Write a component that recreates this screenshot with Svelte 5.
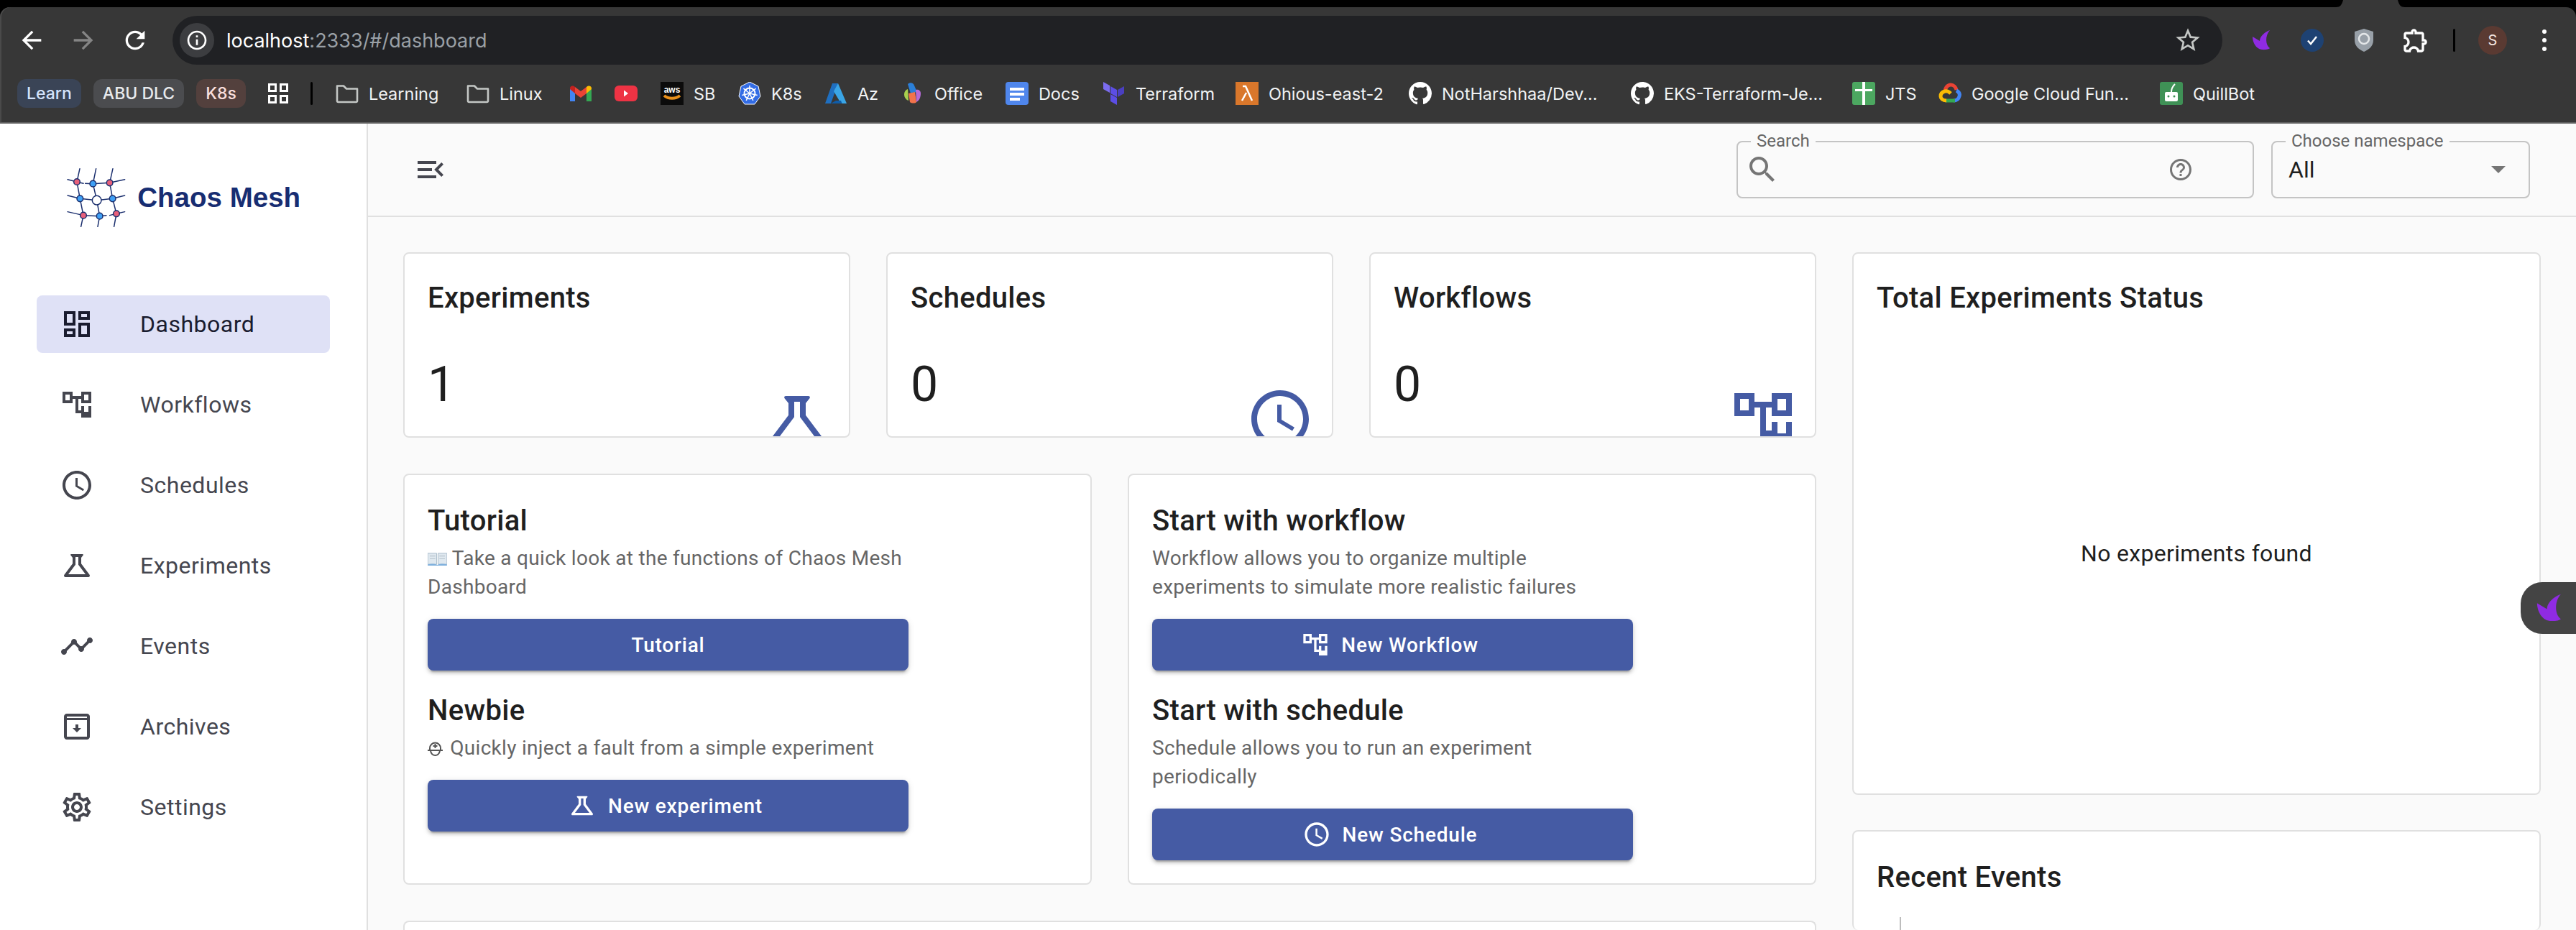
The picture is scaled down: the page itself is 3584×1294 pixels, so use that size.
<script>
  const icons = {
    dashboard: 'M19 5v2h-4V5h4M9 5v6H5V5h4m10 8v6h-4v-6h4M9 17v2H5v-2h4M21 3h-8v6h8V3zM11 3H3v10h8V3zm10 8h-8v10h8V11zm-10 4H3v6h8v-6z',
    flow: 'M22 11V3h-7v3H9V3H2v8h7V8h2v10h4v3h7v-8h-7v3h-2V8h2v3h7zM7 9H4V5h3v4zm10 4h3v4h-3v-4zm0-8h3v4h-3V5z',
    clock: 'M11.99 2C6.47 2 2 6.48 2 12s4.47 10 9.99 10C17.52 22 22 17.52 22 12S17.52 2 11.99 2zM12 20c-4.42 0-8-3.58-8-8s3.58-8 8-8 8 3.58 8 8-3.58 8-8 8zM12.5 7H11v6l5.25 3.15.75-1.23-4.5-2.67z',
    flask: 'M13 6v5.33L18 18H6l5-6.67V6h2M15.96 4H8.04c-.42 0-.65.48-.39.81L9 6.5v4.17L3.2 18.4C2.71 19.06 3.18 20 4 20h16c.82 0 1.29-.94.8-1.6L15 10.67V6.5l1.35-1.69c.26-.33.03-.81-.39-.81z',
    events: 'M23 8c0 1.1-.9 2-2 2-.18 0-.35-.02-.51-.07l-3.56 3.55c.05.16.07.34.07.52 0 1.1-.9 2-2 2s-2-.9-2-2c0-.18.02-.36.07-.52l-2.55-2.55c-.16.05-.34.07-.52.07s-.36-.02-.52-.07l-4.55 4.56c.05.16.07.33.07.51 0 1.1-.9 2-2 2s-2-.9-2-2 .9-2 2-2c.18 0 .35.02.51.07l4.56-4.55C8.02 9.36 8 9.18 8 9c0-1.1.9-2 2-2s2 .9 2 2c0 .18-.02.36-.07.52l2.55 2.55c.16-.05.34-.07.52-.07s.36.02.52.07l3.55-3.56C19.02 8.35 19 8.18 19 8c0-1.1.9-2 2-2s2 .9 2 2z',
    archive: 'M19 3H5c-1.1 0-2 .9-2 2v14c0 1.1.9 2 2 2h14c1.1 0 2-.9 2-2V5c0-1.1-.9-2-2-2zM5 5h14v1H5V5zm0 14V7.5h14V19H5zm8-8.5h-2V13H9l3 3 3-3h-2z',
    settings: 'M19.43 12.98c.04-.32.07-.64.07-.98 0-.34-.03-.66-.07-.98l2.11-1.65c.19-.15.24-.42.12-.64l-2-3.46c-.09-.16-.26-.25-.44-.25-.06 0-.12.01-.17.03l-2.49 1c-.52-.4-1.08-.73-1.69-.98l-.38-2.65C14.46 2.18 14.25 2 14 2h-4c-.25 0-.46.18-.49.42l-.38 2.65c-.61.25-1.17.59-1.69.98l-2.49-1c-.06-.02-.12-.03-.18-.03-.17 0-.34.09-.43.25l-2 3.46c-.13.22-.07.49.12.64l2.11 1.65c-.04.32-.07.65-.07.98 0 .33.03.66.07.98l-2.11 1.65c-.19.15-.24.42-.12.64l2 3.46c.09.16.26.25.44.25.06 0 .12-.01.17-.03l2.49-1c.52.4 1.08.73 1.69.98l.38 2.65c.03.24.24.42.49.42h4c.25 0 .46-.18.49-.42l.38-2.65c.61-.25 1.17-.59 1.69-.98l2.49 1c.06.02.12.03.18.03.17 0 .34-.09.43-.25l2-3.46c.12-.22.07-.49-.12-.64l-2.11-1.65zm-1.98-1.71c.04.31.05.52.05.73 0 .21-.02.43-.05.73l-.14 1.13.89.7 1.08.84-.7 1.21-1.27-.51-1.04-.42-.9.68c-.43.32-.84.56-1.25.73l-1.06.43-.16 1.13-.2 1.35h-1.4l-.19-1.35-.16-1.13-1.06-.43c-.43-.18-.83-.41-1.23-.71l-.91-.7-1.06.43-1.27.51-.7-1.21 1.08-.84.89-.7-.14-1.13c-.03-.31-.05-.54-.05-.74s.02-.43.05-.73l.14-1.13-.89-.7-1.08-.84.7-1.21 1.27.51 1.04.42.9-.68c.43-.32.84-.56 1.25-.73l1.06-.43.16-1.13.2-1.35h1.39l.19 1.35.16 1.13 1.06.43c.43.18.83.41 1.23.71l.91.7 1.06-.43 1.27-.51.7 1.21-1.07.85-.89.7.14 1.13zM12 8c-2.21 0-4 1.79-4 4s1.79 4 4 4 4-1.79 4-4-1.79-4-4-4zm0 6c-1.1 0-2-.9-2-2s.9-2 2-2 2 .9 2 2-.9 2-2 2z',
    back: 'M20 11H7.83l5.59-5.59L12 4l-8 8 8 8 1.41-1.41L7.83 13H20v-2z',
    forward: 'M12 4l-1.41 1.41L16.17 11H4v2h12.17l-5.58 5.59L12 20l8-8z',
    reload: 'M17.65 6.35A7.95 7.95 0 0 0 12 4c-4.42 0-7.99 3.58-7.99 8s3.57 8 7.99 8c3.73 0 6.84-2.55 7.73-6h-2.08A5.99 5.99 0 0 1 12 18c-3.31 0-6-2.69-6-6s2.69-6 6-6c1.66 0 3.14.69 4.22 1.78L13 11h7V4l-2.35 2.35z',
    info: 'M11 7h2v2h-2zm0 4h2v6h-2zm1-9C6.48 2 2 6.48 2 12s4.48 10 10 10 10-4.48 10-10S17.52 2 12 2zm0 18c-4.41 0-8-3.59-8-8s3.59-8 8-8 8 3.59 8 8-3.59 8-8 8z',
    star: 'M22 9.24l-7.19-.62L12 2 9.19 8.63 2 9.24l5.46 4.73L5.82 21 12 17.27 18.18 21l-1.63-7.03L22 9.24zM12 15.4l-3.76 2.27 1-4.28-3.32-2.88 4.38-.38L12 6.1l1.71 4.04 4.38.38-3.32 2.88 1 4.28L12 15.4z',
    puzzle: 'M10.5 4.5c.28 0 .5.22.5.5v2h6v6h2c.28 0 .5.22.5.5s-.22.5-.5.5h-2v6h-2.12c-.68-1.75-2.39-3-4.38-3s-3.7 1.25-4.38 3H4v-2.12c1.75-.68 3-2.39 3-4.38 0-1.99-1.24-3.7-2.99-4.38L4 7h6V5c0-.28.22-.5.5-.5m0-2C9.12 2.5 8 3.62 8 5H4c-1.1 0-1.99.9-1.99 2v3.8h.29c1.49 0 2.7 1.21 2.7 2.7s-1.21 2.7-2.7 2.7H2V20c0 1.1.9 2 2 2h3.8v-.3c0-1.49 1.21-2.7 2.7-2.7s2.7 1.21 2.7 2.7v.3H17c1.1 0 2-.9 2-2v-4c1.38 0 2.5-1.12 2.5-2.5S20.38 11 19 11V7c0-1.1-.9-2-2-2h-4c0-1.38-1.12-2.5-2.5-2.5z',
    menuOpen: 'M3 18h13v-2H3v2zm0-5h10v-2H3v2zm0-7v2h13V6H3zm18 9.59L17.42 12 21 8.41 19.59 7l-5 5 5 5L21 15.59z',
    search: 'M15.5 14h-.79l-.28-.27C15.41 12.59 16 11.11 16 9.5 16 5.91 13.09 3 9.5 3S3 5.91 3 9.5 5.91 16 9.5 16c1.61 0 3.09-.59 4.23-1.57l.27.28v.79l5 4.99L20.49 19l-4.99-5zm-6 0C7.01 14 5 11.99 5 9.5S7.01 5 9.5 5 14 7.01 14 9.5 11.99 14 9.5 14z',
    help: 'M11 18h2v-2h-2v2zm1-16C6.48 2 2 6.48 2 12s4.48 10 10 10 10-4.48 10-10S17.52 2 12 2zm0 18c-4.41 0-8-3.59-8-8s3.59-8 8-8 8 3.59 8 8-3.59 8-8 8zm0-14c-2.21 0-4 1.79-4 4h2c0-1.1.9-2 2-2s2 .9 2 2c0 2-3 1.75-3 5h2c0-2.25 3-2.5 3-5 0-2.21-1.79-4-4-4z',
    github: 'M8 0C3.58 0 0 3.58 0 8c0 3.54 2.29 6.53 5.47 7.59.4.07.55-.17.55-.4 0-.2-.01-.86-.01-1.57-2.01.37-2.53-.49-2.69-.94-.09-.23-.48-.94-.82-1.13-.28-.15-.68-.52-.01-.53.63-.01 1.08.58 1.23.82.72 1.21 1.87.87 2.33.66.07-.52.28-.87.51-1.07-1.78-.2-3.64-.89-3.64-3.95 0-.87.31-1.59.82-2.15-.08-.2-.36-1.02.08-2.12 0 0 .67-.21 2.2.82.64-.18 1.32-.27 2-.27.68 0 1.36.09 2 .27 1.53-1.04 2.2-.82 2.2-.82.44 1.1.16 1.92.08 2.12.51.56.82 1.27.82 2.15 0 3.07-1.87 3.75-3.65 3.95.29.25.54.73.54 1.48 0 1.07-.01 1.93-.01 2.2 0 .21.15.46.55.38A8.013 8.013 0 0016 8c0-4.42-3.58-8-8-8z',
  }

  const swoosh = 'M29 2C21 5 15 11 15 17L5 11c0 7 4 17 13 18 5 .5 10-.5 11-2C23 23 22 10 29 2z'

  const nav = [
    { label: 'Dashboard', icon: 'dashboard', active: true },
    { label: 'Workflows', icon: 'flow' },
    { label: 'Schedules', icon: 'clock' },
    { label: 'Experiments', icon: 'flask' },
    { label: 'Events', icon: 'events' },
    { label: 'Archives', icon: 'archive' },
    { label: 'Settings', icon: 'settings' },
  ]

  const stats = [
    { label: 'Experiments', value: 1, icon: 'flask' },
    { label: 'Schedules', value: 0, icon: 'clock' },
    { label: 'Workflows', value: 0, icon: 'flow' },
  ]

  // w = slot width of each bookmark, the bar gives them uneven widths
  const bookmarks = [
    { icon: 'folder', label: 'Learning', w: 182 },
    { icon: 'folder', label: 'Linux', w: 143 },
    { icon: 'gmail', w: 63 },
    { icon: 'youtube', w: 64 },
    { icon: 'aws', label: 'SB', w: 108 },
    { icon: 'k8s', label: 'K8s', w: 120 },
    { icon: 'azure', label: 'Az', w: 107 },
    { icon: 'office', label: 'Office', w: 145 },
    { icon: 'docs', label: 'Docs', w: 135 },
    { icon: 'terraform', label: 'Terraform', w: 185 },
    { icon: 'lambda', label: 'Ohious-east-2', w: 241 },
    { icon: 'github', label: 'NotHarshhaa/Dev...', w: 309 },
    { icon: 'github', label: 'EKS-Terraform-Je...', w: 308 },
    { icon: 'jts', label: 'JTS', w: 120 },
    { icon: 'gcloud', label: 'Google Cloud Fun...', w: 308 },
    { icon: 'quill', label: 'QuillBot', w: 140 },
  ]

  const spokes = [0, 51, 103, 154, 206, 257, 309]
</script>

{#snippet svgIcon(name, cls)}
  <svg class={cls} viewBox="0 0 24 24" fill="currentColor"><path d={icons[name]} /></svg>
{/snippet}

{#snippet favicon(name)}
  <svg class="fav" viewBox="0 0 32 32">
    {#if name === 'folder'}
      <path d="M2 5.500h9l4 4h15v17a1.500 1.500 0 0 1-1.500 1.500h-25A1.500 1.500 0 0 1 2 26.500z" fill="none" stroke="#c4c7c5" stroke-width="2.600" stroke-linejoin="round" />
    {:else if name === 'gmail'}
      <path fill="#4285f4" d="M1 27h7V14L1 9z" />
      <path fill="#34a853" d="M24 27h7V9l-7 5z" />
      <path fill="#ea4335" d="M8 16V7l8 6 8-6v9l-8 6z" />
      <path fill="#c5221f" d="M1 9c0-3 3.500-5 7-2v9l-7-6z" />
      <path fill="#fbbc04" d="M24 7c3.500-3 7-1 7 2v1l-7 6z" />
    {:else if name === 'youtube'}
      <rect x="0" y="5" width="32" height="22" rx="6" fill="#ee3344" />
      <path d="M13 11.500l6 4.500-6 4.500z" fill="#fff" />
    {:else if name === 'aws'}
      <rect width="32" height="32" fill="#0b0b0b" />
      <text x="16" y="15" text-anchor="middle" font-family="Liberation Sans" font-weight="700" font-size="12" fill="#fff">aws</text>
      <path d="M5 19c6 5 16 5 22 0" fill="none" stroke="#e8901c" stroke-width="4" />
    {:else if name === 'k8s'}
      <path d="M16 0l12 6 3 14-8 11H9L1 20 4 6z" fill="#326ce5" stroke="#fff" stroke-width="1" />
      <circle cx="16" cy="16" r="7.500" fill="none" stroke="#fff" stroke-width="2" />
      {#each spokes as a}
        <path d="M16 16V5" stroke="#fff" stroke-width="1.500" transform="rotate({a} 16 16)" />
      {/each}
    {:else if name === 'azure'}
      <path fill="#1f6fc0" d="M11 2h8L9 30H1z" />
      <path fill="#3aa5e6" d="M19 2l12 28h-8L13 13z" />
      <path fill="#0f5ca8" d="M9 30l7-4h7l1.500 4z" />
    {:else if name === 'office'}
      <path fill="#2b7fd8" d="M9 3c3-3 8-2 9 2l4 9-9 2z" />
      <path fill="#a8d04e" d="M4 17c0-3 2-6 5-7l1 16c-3-1-6-4-6-9z" />
      <path fill="#f2734c" d="M10 16l9-2 2 14c-1 2-7 2-9 0z" />
      <path fill="#b66ad8" d="M20 11c4-1 7 1 7 5 0 5-2 10-6 12z" />
    {:else if name === 'docs'}
      <rect width="32" height="32" rx="4" fill="#4f86ec" />
      <path d="M6 8h20v4H6zM6 15h20v4H6zM6 22h14v4H6z" fill="#fff" />
    {:else if name === 'terraform'}
      <path fill="#7b6cf0" d="M1 0l9 5v10L1 10z" />
      <path fill="#5c4ee5" d="M11 6l9 5v10l-9-5z" />
      <path fill="#4a3fc0" d="M21 11l9-5v10l-9 5z" />
      <path fill="#5c4ee5" d="M11 17l9 5v10l-9-5z" />
    {:else if name === 'lambda'}
      <rect width="32" height="32" fill="#d9772b" />
      <path d="M10 6h4l9 20M15 15l-6 11" fill="none" stroke="#fff" stroke-width="2.500" />
    {:else if name === 'github'}
      <g transform="scale(2)"><path fill="#fff" d={icons.github} /></g>
    {:else if name === 'jts'}
      <rect width="32" height="32" rx="3" fill="#4ca760" />
      <path d="M14 0h4v32h-4zM4 10h24v3H4z" fill="#fff" />
    {:else if name === 'gcloud'}
      <path d="M9 14C9 8 13 4 17 4s7 3 8 7" fill="none" stroke="#ea4335" stroke-width="5" />
      <path d="M25 12c4 2 5 5 4 8-1 4-4 6-8 6" fill="none" stroke="#4285f4" stroke-width="5" />
      <path d="M23 26H10" fill="none" stroke="#34a853" stroke-width="5" />
      <path d="M11 26c-5 0-8-3-8-6s2-6 6-7 6 1 8 3" fill="none" stroke="#fbbc04" stroke-width="5" />
    {:else if name === 'quill'}
      <rect width="32" height="32" rx="3" fill="#3f9156" />
      <rect x="7" y="14" width="18" height="13" rx="2" fill="#fff" />
      <circle cx="12" cy="20" r="1.500" fill="#3f9156" />
      <circle cx="20" cy="20" r="1.500" fill="#3f9156" />
      <path d="M16 14c0-4 2-8 5-11" fill="none" stroke="#fff" stroke-width="2" />
    {/if}
  </svg>
{/snippet}

<div class="screen">
  <div class="strip">
    <svg class="notch" viewBox="0 0 96 10"><path d="M0 10c6 0 8-3 10-10h76c2 7 4 10 10 10z" fill="#373737" /></svg>
  </div>

  <header class="browser">
    <div class="toolbar">
      <div class="navbtns">
        {@render svgIcon('back', 'tb')}
        {@render svgIcon('forward', 'tb dim')}
        {@render svgIcon('reload', 'tb')}
      </div>
      <div class="omnibox">
        <span class="siteinfo">{@render svgIcon('info', 'infoicon')}</span>
        <span class="url">localhost<span class="urlrest">:2333/#/dashboard</span></span>
        {@render svgIcon('star', 'tb star')}
      </div>
      <div class="exts">
        <svg class="tb" viewBox="0 0 32 32"><path d={swoosh} fill="#8f2be2" /></svg>
        <svg class="tb" viewBox="0 0 32 32">
          <circle cx="16" cy="16" r="16" fill="#1e4273" />
          <path d="M10 16.500l4 4.500 8-10" fill="none" stroke="#fff" stroke-width="2.500" />
        </svg>
        <svg class="tb" viewBox="0 0 32 32">
          <path d="M16 0l13 4v12c0 8-6 13-13 16C9 29 3 24 3 16V4z" fill="#98a0a8" />
          <circle cx="16" cy="14" r="7" fill="none" stroke="#e3e6e8" stroke-width="2.500" />
        </svg>
        {@render svgIcon('puzzle', 'tb')}
        <span class="tbsep"></span>
        <span class="avatar">S</span>
        <svg class="tb" viewBox="0 0 40 40" fill="#fff">
          <circle cx="20" cy="8" r="3" /><circle cx="20" cy="20" r="3" /><circle cx="20" cy="32" r="3" />
        </svg>
      </div>
    </div>

    <div class="bookmarks">
      <span class="chip blue">Learn</span>
      <span class="chip grey">ABU DLC</span>
      <span class="chip red">K8s</span>
      <svg class="apps" viewBox="0 0 28 28" fill="none" stroke="#fff" stroke-width="3">
        <rect x="1.500" y="1.500" width="9" height="9" /><rect x="17.500" y="1.500" width="9" height="9" />
        <rect x="1.500" y="17.500" width="9" height="9" /><rect x="17.500" y="17.500" width="9" height="9" />
      </svg>
      <span class="bmsep"></span>
      {#each bookmarks as b}
        <span class="bm" style:width="{b.w}px">
          {@render favicon(b.icon)}
          {#if b.label}<span>{b.label}</span>{/if}
        </span>
      {/each}
    </div>
  </header>

  <div class="page">
    <aside class="sidebar">
      <div class="brand">
        <svg class="logo" viewBox="100 75 250 250" fill="none" stroke="#1b2f6e" stroke-width="4.500" stroke-linecap="round" stroke-linejoin="round">
          <path d="M106 125L145 135M145 135L172 142M180 142L212 143L282 139L345 125" />
          <path d="M106 192L158 205L228 212L294 205L345 192" />
          <path d="M106 260L172 275L240 278L268 275M282 275L310 268L345 260" />
          <path d="M157 80L145 135L158 205L172 275L162 322" />
          <path d="M225 80L212 143L228 212L240 278L232 322" />
          <path d="M295 80L282 139L294 205L310 268L300 322" />
          <g fill="#e8607a">
            <circle cx="145" cy="135" r="13" /><circle cx="282" cy="139" r="13" />
            <circle cx="172" cy="275" r="13" /><circle cx="310" cy="268" r="13" />
          </g>
          <g fill="#3fa0f5">
            <circle cx="212" cy="143" r="13" /><circle cx="158" cy="205" r="13" />
            <circle cx="294" cy="205" r="13" /><circle cx="240" cy="278" r="13" />
          </g>
          <circle cx="228" cy="212" r="19" fill="#fff" />
        </svg>
        <span class="brandname">Chaos Mesh</span>
      </div>
      <nav>
        {#each nav as item}
          <div class="navitem" class:active={item.active}>
            {@render svgIcon(item.icon, 'navicon')}
            <span>{item.label}</span>
          </div>
        {/each}
      </nav>
    </aside>

    <main class="main">
      <div class="topbar">
        {@render svgIcon('menuOpen', 'menuicon')}
        <div class="field search">
          <span class="flabel">Search</span>
          {@render svgIcon('search', 'searchicon')}
          {@render svgIcon('help', 'helpicon')}
        </div>
        <div class="field ns">
          <span class="flabel">Choose namespace</span>
          <span class="nsvalue">All</span>
          <span class="caret"></span>
        </div>
      </div>

      <div class="content">
        <div class="left">
          <div class="stats">
            {#each stats as s}
              <div class="card stat">
                <div class="h6">{s.label}</div>
                <div class="num">{s.value}</div>
                {@render svgIcon(s.icon, 'staticon')}
              </div>
            {/each}
          </div>

          <div class="welcome">
            <div class="card pad">
              <div class="col">
                <div class="h6">Tutorial</div>
                <p>
                  <svg class="book" viewBox="0 0 28 22">
                    <path d="M0 3h13v16H0zM15 3h13v16H15z" fill="#dfe8ef" stroke="#a9bccb" stroke-width="1" />
                    <path d="M0 19c5-1 10-1 14 1 4-2 9-2 14-1v2H0z" fill="#7fb0dd" />
                    <path d="M3 7h8M3 11h8M17 7h8M17 11h8" stroke="#b8c4cd" stroke-width="1.200" />
                  </svg>
                  Take a quick look at the functions of Chaos Mesh Dashboard
                </p>
                <button>Tutorial</button>
                <div class="h6 second">Newbie</div>
                <p>
                  <svg class="helmet" viewBox="0 0 21 21" fill="none" stroke="#555" stroke-width="2">
                    <path d="M3 13V10a7.500 7.500 0 0 1 15 0v3" />
                    <path d="M0 13h21" />
                    <path d="M4 14c1 4 4 6 6.500 6s5.500-2 6.500-6" />
                    <path d="M10.500 4v6M7.500 7h6" />
                  </svg>
                  Quickly inject a fault from a simple experiment
                </p>
                <button>{@render svgIcon('flask', 'btnicon')}New experiment</button>
              </div>
            </div>
            <div class="card pad">
              <div class="col">
                <div class="h6">Start with workflow</div>
                <p>Workflow allows you to organize multiple experiments to simulate more realistic failures</p>
                <button>{@render svgIcon('flow', 'btnicon')}New Workflow</button>
                <div class="h6 second">Start with schedule</div>
                <p>Schedule allows you to run an experiment periodically</p>
                <button>{@render svgIcon('clock', 'btnicon')}New Schedule</button>
              </div>
            </div>
          </div>

          <div class="card pad tall"></div>
        </div>

        <div class="right">
          <div class="card pad status">
            <div class="h6">Total Experiments Status</div>
            <div class="empty">No experiments found</div>
          </div>
          <div class="card pad tall">
            <div class="h6">Recent Events</div>
            <div class="timeline"></div>
          </div>
        </div>
      </div>
    </main>
  </div>

  <div class="widget">
    <svg viewBox="0 0 32 32"><path d={swoosh} fill="#8f2be2" /></svg>
  </div>
</div>

<style>
  :global(body) {
    margin: 0;
    background: #fafafa;
  }
  .screen {
    position: relative;
    width: 3584px;
    height: 1294px;
    overflow: hidden;
    display: flex;
    flex-direction: column;
    font-family: Roboto, sans-serif;
    background: #000;
  }
  .strip {
    position: relative;
    height: 10px;
    flex: none;
  }
  .notch {
    position: absolute;
    left: 3250px;
    top: 0;
    width: 96px;
    height: 10px;
  }
  .browser {
    flex: none;
    height: 162px;
    box-sizing: border-box;
    background: #373737;
    border-radius: 14px 14px 0 0;
    border-bottom: 2px solid #5f5f5f;
    box-shadow: inset 2px 0 0 #4a4a4a;
    padding-top: 12px;
  }
  .toolbar {
    display: flex;
    align-items: center;
    height: 68px;
    padding: 0 24px;
  }
  .navbtns {
    display: flex;
    gap: 32px;
    margin-right: 32px;
  }
  .tb {
    width: 40px;
    height: 40px;
    flex: none;
    color: #fff;
  }
  .tb.dim {
    color: #858585;
  }
  .tb.star {
    color: #c4c7c5;
  }
  .omnibox {
    flex: 1;
    height: 68px;
    display: flex;
    align-items: center;
    background: #202124;
    border-radius: 34px;
    padding: 0 28px 0 10px;
  }
  .siteinfo {
    width: 48px;
    height: 48px;
    border-radius: 50%;
    background: #3c3d40;
    display: flex;
    align-items: center;
    justify-content: center;
    color: #fff;
    margin-right: 17px;
  }
  .infoicon {
    width: 32px;
    height: 32px;
  }
  .url {
    flex: 1;
    font-family: Inter, sans-serif;
    font-size: 27px;
    color: #fff;
  }
  .urlrest {
    color: #9aa0a6;
  }
  .exts {
    display: flex;
    align-items: center;
    gap: 32px;
    margin-left: 33px;
  }
  .exts .tb:nth-child(-n + 3) {
    width: 32px;
    height: 32px;
    margin: 0 4px;
  }
  .tbsep {
    width: 3px;
    height: 32px;
    border-radius: 2px;
    background: #000;
  }
  .avatar {
    width: 40px;
    height: 40px;
    border-radius: 50%;
    background: #5a3a32;
    color: #f5e6e0;
    font-family: Inter, sans-serif;
    font-size: 20px;
    display: flex;
    align-items: center;
    justify-content: center;
  }
  .bookmarks {
    display: flex;
    align-items: center;
    height: 40px;
    margin-top: 20px;
    padding-left: 24px;
    font-family: Inter, sans-serif;
    font-size: 23.500px;
    color: #f1f3f4;
    white-space: nowrap;
  }
  .chip {
    height: 40px;
    box-sizing: border-box;
    padding: 0 13px;
    display: flex;
    align-items: center;
    border-radius: 12px;
    margin-right: 17px;
    font-size: 23px;
    font-weight: 500;
  }
  .chip.blue {
    background: #3a4456;
    color: #d3e3fd;
  }
  .chip.grey {
    background: #4b4c4f;
    color: #e8eaed;
  }
  .chip.red {
    background: #53403d;
    color: #f9dedc;
  }
  .apps {
    flex: none;
    width: 28px;
    height: 28px;
    margin-left: 14px;
  }
  .bmsep {
    flex: none;
    width: 3px;
    height: 32px;
    background: #000;
    border-radius: 2px;
    margin: 0 32px 0 31px;
  }
  .bm {
    flex: none;
    display: flex;
    align-items: center;
    gap: 14px;
  }
  .fav {
    width: 32px;
    height: 32px;
    flex: none;
  }
  .page {
    flex: 1;
    min-height: 0;
    display: flex;
    background: #fafafa;
  }
  .sidebar {
    flex: none;
    width: 512px;
    box-sizing: border-box;
    background: #fff;
    border-right: 2px solid #e0e0e0;
  }
  .brand {
    display: flex;
    align-items: center;
    gap: 16px;
    padding: 61px 0 0 92px;
  }
  .logo {
    width: 83.300px;
    height: 83.300px;
    flex: none;
  }
  .brandname {
    font-family: 'Liberation Sans', sans-serif;
    font-weight: 700;
    font-size: 38.500px;
    color: #172d72;
  }
  nav {
    margin: 95px 0 0 51px;
    width: 408px;
    display: flex;
    flex-direction: column;
    gap: 32px;
  }
  .navitem {
    height: 80px;
    display: flex;
    align-items: center;
    gap: 64px;
    padding-left: 32px;
    border-radius: 8px;
    color: #45464f;
    font-size: 32px;
    font-weight: 400;
    letter-spacing: 0.5px;
  }
  .navitem.active {
    background: #dfe1f6;
    color: #1a1c2f;
  }
  .navicon {
    width: 48px;
    height: 48px;
    flex: none;
  }
  .main {
    flex: 1;
    min-width: 0;
    display: flex;
    flex-direction: column;
  }
  .topbar {
    flex: none;
    height: 130px;
    box-sizing: border-box;
    border-bottom: 2px solid #e0e0e0;
    display: flex;
    align-items: center;
    padding: 0 64px 0 63px;
  }
  .menuicon {
    width: 48px;
    height: 48px;
    color: #45464f;
    margin-right: auto;
  }
  .field {
    position: relative;
    box-sizing: border-box;
    height: 80px;
    border: 2px solid #c4c4c4;
    border-radius: 8px;
    display: flex;
    align-items: center;
  }
  .search {
    width: 720px;
    margin-right: 24px;
    padding: 0 82px 0 10px;
    justify-content: space-between;
  }
  .ns {
    width: 360px;
    padding: 0 32px 0 22px;
    justify-content: space-between;
  }
  .flabel {
    position: absolute;
    left: 18px;
    top: -16px;
    padding: 0 8px;
    background: #fafafa;
    font-size: 24px;
    line-height: 28px;
    color: #666;
  }
  .searchicon {
    width: 48px;
    height: 48px;
    color: #757575;
  }
  .helpicon {
    width: 36px;
    height: 36px;
    color: #757575;
  }
  .nsvalue {
    font-size: 32px;
    color: #1f1f1f;
  }
  .caret {
    width: 0;
    height: 0;
    border-left: 10px solid transparent;
    border-right: 10px solid transparent;
    border-top: 10px solid #757575;
  }
  .content {
    flex: 1;
    min-height: 0;
    display: flex;
    gap: 50px;
    padding: 49px 49px 0;
  }
  .left {
    width: 1966px;
    flex: none;
    display: flex;
    flex-direction: column;
    gap: 50px;
  }
  .right {
    flex: 1;
    display: flex;
    flex-direction: column;
    gap: 49px;
  }
  .stats {
    display: grid;
    grid-template-columns: repeat(3, 1fr);
    gap: 50px;
  }
  .welcome {
    display: grid;
    grid-template-columns: repeat(2, 1fr);
    gap: 50px;
  }
  .card {
    position: relative;
    box-sizing: border-box;
    background: #fff;
    border: 2px solid #e0e0e0;
    border-radius: 8px;
    overflow: hidden;
  }
  .pad {
    padding: 32px;
  }
  .stat {
    height: 258px;
    padding: 30px 32px 0;
  }
  .h6 {
    font-size: 40px;
    font-weight: 500;
    line-height: 64px;
    letter-spacing: 0.3px;
    color: #1f1f1f;
  }
  .num {
    margin-top: 48px;
    font-size: 68px;
    line-height: 80px;
    color: #1f1f1f;
  }
  .staticon {
    position: absolute;
    right: 24px;
    top: 182px;
    width: 96px;
    height: 96px;
    color: #455ba4;
  }
  .welcome .card {
    height: 572px;
  }
  .col {
    width: 669px;
  }
  p {
    margin: 0;
    font-size: 28px;
    line-height: 40px;
    letter-spacing: 0.3px;
    color: #666;
  }
  .book {
    width: 27px;
    height: 21px;
    vertical-align: -2px;
  }
  .helmet {
    width: 21px;
    height: 21px;
    vertical-align: -2px;
    margin-right: 3px;
  }
  button {
    display: flex;
    align-items: center;
    justify-content: center;
    width: 100%;
    height: 72px;
    margin-top: 24px;
    border: 0;
    border-radius: 8px;
    background: #455ba4;
    color: #fff;
    font-family: Roboto, sans-serif;
    font-size: 28px;
    font-weight: 500;
    letter-spacing: 0.8px;
    box-shadow: 0 6px 2px -4px rgba(0, 0, 0, 0.2), 0 4px 4px 0 rgba(0, 0, 0, 0.14), 0 2px 10px 0 rgba(0, 0, 0, 0.12);
  }
  .btnicon {
    width: 40px;
    height: 40px;
    margin: 0 16px 0 -8px;
  }
  .second {
    margin-top: 24px;
  }
  .tall {
    flex: 1;
    border-bottom: 0;
  }
  .status {
    height: 755px;
    flex: none;
    display: flex;
    flex-direction: column;
    padding-top: 30px;
  }
  .empty {
    margin-top: 298px;
    text-align: center;
    font-size: 32px;
    line-height: 50px;
    letter-spacing: 0.3px;
    color: #1f1f1f;
  }
  .timeline {
    width: 2px;
    height: 200px;
    margin: 23px 0 0 32px;
    background: #bdbdbd;
  }
  .widget {
    position: absolute;
    right: 0;
    top: 810px;
    width: 77px;
    height: 72px;
    box-sizing: border-box;
    padding: 14px 0 0 16px;
    background: #444;
    border-radius: 30px 0 0 30px;
  }
  .widget svg {
    display: block;
    width: 44px;
    height: 44px;
  }
</style>
